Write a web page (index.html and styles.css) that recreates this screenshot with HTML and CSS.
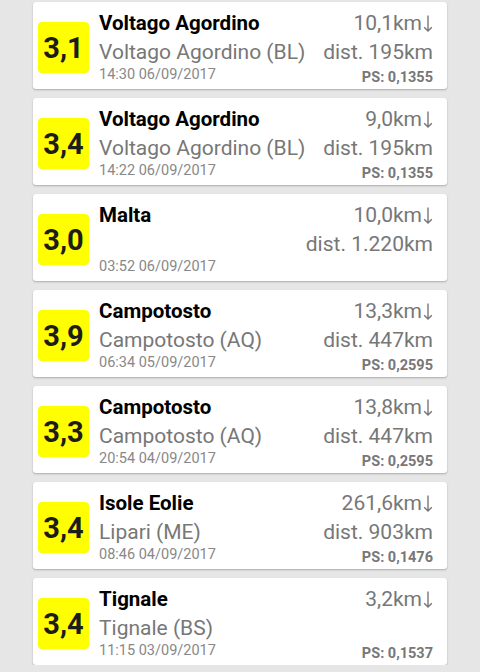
FILE: index.html
```html
<!DOCTYPE html>
<html lang="it">
<head>
  <meta charset="UTF-8">
  <meta name="viewport" content="width=device-width, initial-scale=1">
  <title>Terremoti</title>
  <link rel="stylesheet" href="styles.css">
</head>
<body>
  <div class="quake-list">
    <div class="quake-card">
      <div class="mag">3,1</div>
      <div class="info">
        <div class="left">
          <div class="title">Voltago Agordino</div>
          <div class="place">Voltago Agordino (BL)</div>
          <div class="date">14:30 06/09/2017</div>
        </div>
        <div class="right">
          <div class="depth">10,1km<svg class="arrow" viewBox="0 0 10 17"><path d="M5 0.5V16M1.2 12.2L5 16L8.8 12.2"/></svg></div>
          <div class="dist">dist. 195km</div>
          <div class="ps">PS: 0,1355</div>
        </div>
      </div>
    </div>
    <div class="quake-card">
      <div class="mag">3,4</div>
      <div class="info">
        <div class="left">
          <div class="title">Voltago Agordino</div>
          <div class="place">Voltago Agordino (BL)</div>
          <div class="date">14:22 06/09/2017</div>
        </div>
        <div class="right">
          <div class="depth">9,0km<svg class="arrow" viewBox="0 0 10 17"><path d="M5 0.5V16M1.2 12.2L5 16L8.8 12.2"/></svg></div>
          <div class="dist">dist. 195km</div>
          <div class="ps">PS: 0,1355</div>
        </div>
      </div>
    </div>
    <div class="quake-card">
      <div class="mag">3,0</div>
      <div class="info">
        <div class="left">
          <div class="title">Malta</div>
          <div class="place"></div>
          <div class="date">03:52 06/09/2017</div>
        </div>
        <div class="right">
          <div class="depth">10,0km<svg class="arrow" viewBox="0 0 10 17"><path d="M5 0.5V16M1.2 12.2L5 16L8.8 12.2"/></svg></div>
          <div class="dist">dist. 1.220km</div>
          <div class="ps"></div>
        </div>
      </div>
    </div>
    <div class="quake-card">
      <div class="mag">3,9</div>
      <div class="info">
        <div class="left">
          <div class="title">Campotosto</div>
          <div class="place">Campotosto (AQ)</div>
          <div class="date">06:34 05/09/2017</div>
        </div>
        <div class="right">
          <div class="depth">13,3km<svg class="arrow" viewBox="0 0 10 17"><path d="M5 0.5V16M1.2 12.2L5 16L8.8 12.2"/></svg></div>
          <div class="dist">dist. 447km</div>
          <div class="ps">PS: 0,2595</div>
        </div>
      </div>
    </div>
    <div class="quake-card">
      <div class="mag">3,3</div>
      <div class="info">
        <div class="left">
          <div class="title">Campotosto</div>
          <div class="place">Campotosto (AQ)</div>
          <div class="date">20:54 04/09/2017</div>
        </div>
        <div class="right">
          <div class="depth">13,8km<svg class="arrow" viewBox="0 0 10 17"><path d="M5 0.5V16M1.2 12.2L5 16L8.8 12.2"/></svg></div>
          <div class="dist">dist. 447km</div>
          <div class="ps">PS: 0,2595</div>
        </div>
      </div>
    </div>
    <div class="quake-card">
      <div class="mag">3,4</div>
      <div class="info">
        <div class="left">
          <div class="title">Isole Eolie</div>
          <div class="place">Lipari (ME)</div>
          <div class="date">08:46 04/09/2017</div>
        </div>
        <div class="right">
          <div class="depth">261,6km<svg class="arrow" viewBox="0 0 10 17"><path d="M5 0.5V16M1.2 12.2L5 16L8.8 12.2"/></svg></div>
          <div class="dist">dist. 903km</div>
          <div class="ps">PS: 0,1476</div>
        </div>
      </div>
    </div>
    <div class="quake-card">
      <div class="mag">3,4</div>
      <div class="info">
        <div class="left">
          <div class="title">Tignale</div>
          <div class="place">Tignale (BS)</div>
          <div class="date">11:15 03/09/2017</div>
        </div>
        <div class="right">
          <div class="depth">3,2km<svg class="arrow" viewBox="0 0 10 17"><path d="M5 0.5V16M1.2 12.2L5 16L8.8 12.2"/></svg></div>
          <div class="dist"></div>
          <div class="ps">PS: 0,1537</div>
        </div>
      </div>
    </div>
  </div>
</body>
</html>
```

FILE: styles.css
```css
body {
  margin: 0; padding: 0;
  font-family: Roboto, 'Liberation Sans', Arial, sans-serif;
  background: #e6e6e6;
  color: #777;
}
.quake-list {
  display: flex;
  flex-direction: column;
  gap: 9px;
  padding: 2px 33px 0 33px;
}
.quake-card {
  background: #fff;
  border-radius: 3px;
  box-shadow: 0 1px 2px rgba(0,0,0,0.25);
  height: 87px;
  box-sizing: border-box;
  display: flex;
  align-items: center;
  padding: 0 14px 0 5px;
}
.mag {
  width: 51px; height: 51px;
  flex: none;
  background: #ffff00;
  border-radius: 4px;
  display: flex;
  align-items: center;
  justify-content: center;
  font-size: 29px;
  font-weight: 700;
  color: #1c1c1c;
  margin-top: 4px;
}
.info {
  flex: 1;
  display: flex;
  justify-content: space-between;
  align-self: stretch;
  padding: 7px 0 0 10px;
}
.left, .right {
  display: flex;
  flex-direction: column;
}
.right { align-items: flex-end; }
.title {
  font-size: 20.5px;
  font-weight: 700;
  color: #000;
  line-height: 28px;
  height: 29px;
}
.place, .depth, .dist {
  font-size: 21px;
  line-height: 28px;
  height: 28px;
  color: #777;
}
.depth { height: 29px; }
.arrow {
  width: 10px; height: 17px;
  margin-left: 1px;
  vertical-align: -2px;
  fill: none;
  stroke: #777;
  stroke-width: 1.4;
}
.date {
  font-size: 14.5px;
  line-height: 17px;
  color: #888;
}
.ps {
  font-size: 14.5px;
  font-weight: 700;
  line-height: 23px;
  color: #777;
}
```
